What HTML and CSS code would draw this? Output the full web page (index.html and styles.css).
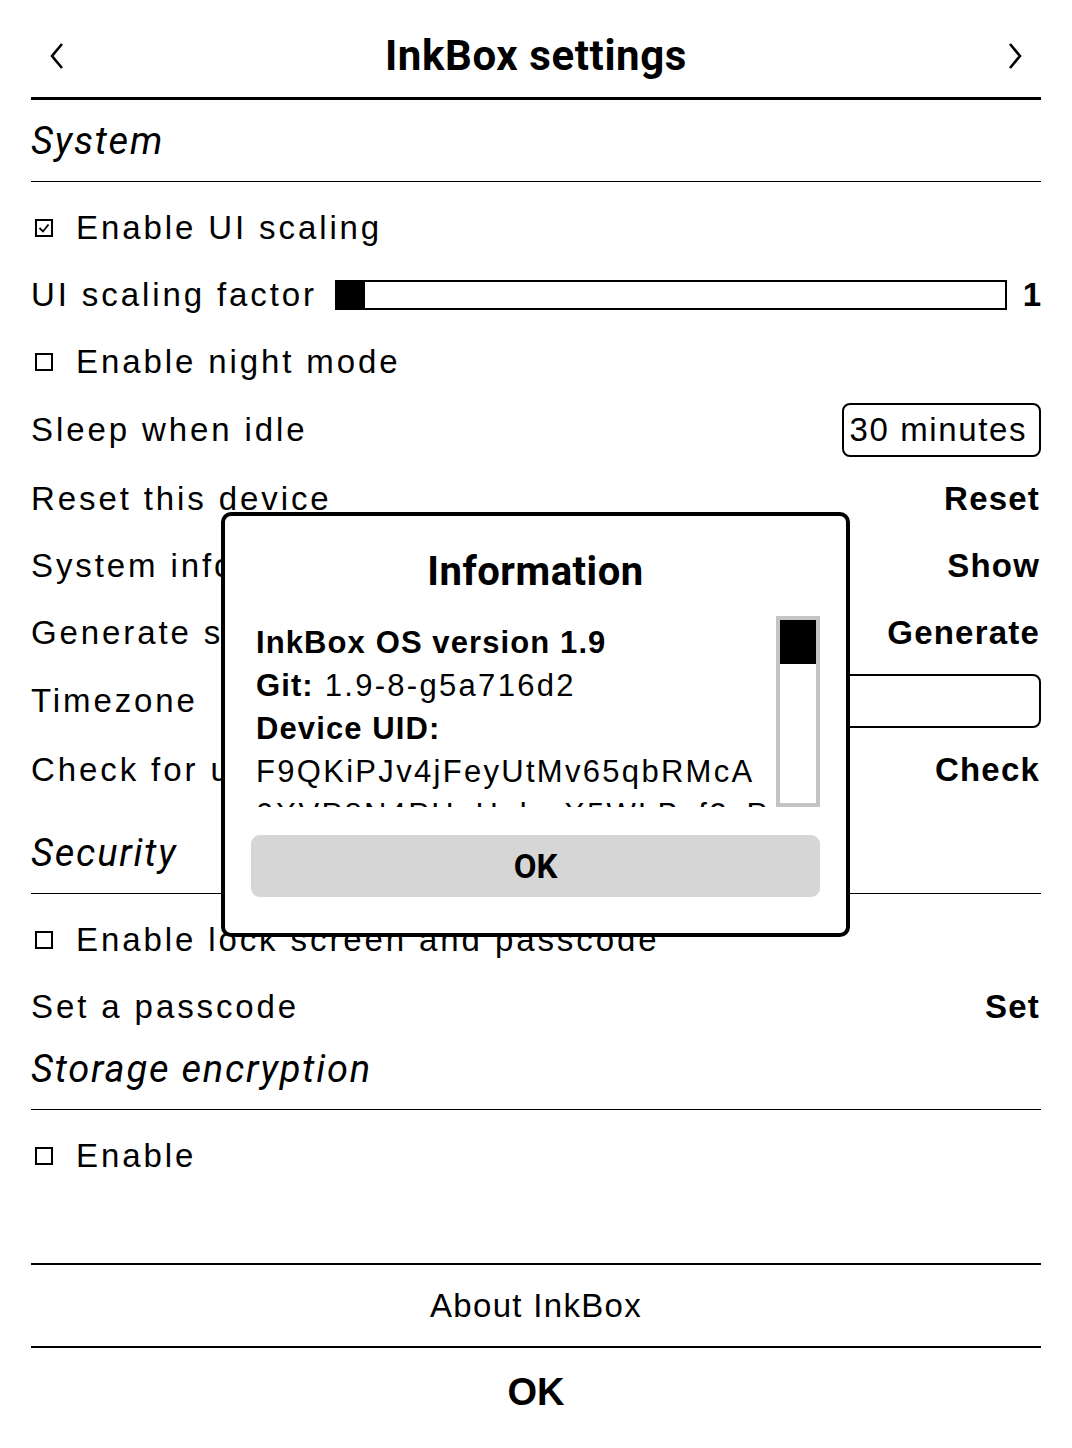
FILE: index.html
```html
<!DOCTYPE html>
<html>
<head>
<meta charset="utf-8">
<link rel="stylesheet" href="styles.css">
</head>
<body>
<div class="page">
  <div class="topbar">
    <svg class="chev" width="20" height="30" viewBox="0 0 20 30"><path d="M14 3 L4 15 L14 27" fill="none" stroke="#000" stroke-width="2.6"/></svg>
    <div class="title">InkBox settings</div>
    <svg class="chev" width="20" height="30" viewBox="0 0 20 30"><path d="M6 3 L16 15 L6 27" fill="none" stroke="#000" stroke-width="2.6"/></svg>
  </div>

  <div class="section sys">System</div>
  <div class="rows">
    <div class="row"><span class="cb"><svg width="18" height="18" viewBox="0 0 18 18"><rect x="1" y="1" width="16" height="16" fill="none" stroke="#000" stroke-width="2"/><path d="M4.5 9 L8 12.5 L13.5 5.5" fill="none" stroke="#000" stroke-width="1.8"/></svg></span><span class="label">Enable UI scaling</span></div>
    <div class="row"><span class="label">UI scaling factor</span><div class="slider"><div class="fill"></div></div><span class="val">1</span></div>
    <div class="row"><span class="cb"><svg width="18" height="18" viewBox="0 0 18 18"><rect x="1" y="1" width="16" height="16" fill="none" stroke="#000" stroke-width="2"/></svg></span><span class="label">Enable night mode</span></div>
    <div class="row combo-row"><span class="label">Sleep when idle</span><span class="spacer"></span><div class="combo">30 minutes</div></div>
    <div class="row"><span class="label">Reset this device</span><span class="spacer"></span><span class="btn">Reset</span></div>
    <div class="row"><span class="label">System info</span><span class="spacer"></span><span class="btn">Show</span></div>
    <div class="row"><span class="label">Generate system report</span><span class="spacer"></span><span class="btn">Generate</span></div>
    <div class="row combo-row"><span class="label">Timezone</span><div class="combo wide"></div></div>
    <div class="row"><span class="label">Check for updates</span><span class="spacer"></span><span class="btn">Check</span></div>
  </div>

  <div class="section sec">Security</div>
  <div class="rows">
    <div class="row"><span class="cb"><svg width="18" height="18" viewBox="0 0 18 18"><rect x="1" y="1" width="16" height="16" fill="none" stroke="#000" stroke-width="2"/></svg></span><span class="label">Enable lock screen and passcode</span></div>
    <div class="row"><span class="label">Set a passcode</span><span class="spacer"></span><span class="btn">Set</span></div>
  </div>

  <div class="section">Storage encryption</div>
  <div class="rows">
    <div class="row"><span class="cb"><svg width="18" height="18" viewBox="0 0 18 18"><rect x="1" y="1" width="16" height="16" fill="none" stroke="#000" stroke-width="2"/></svg></span><span class="label">Enable</span></div>
  </div>

  <div class="grow"></div>
  <div class="about">About InkBox</div>
  <div class="ok">OK</div>

  <div class="dialog">
    <div class="dtitle">Information</div>
    <div class="dbody">
      <div class="dtext">
        <div class="dl"><b>InkBox OS version 1.9</b></div>
        <div class="dl"><b>Git:</b> 1.9-8-g5a716d2</div>
        <div class="dl"><b>Device UID:</b></div>
        <div class="dl">F9QKiPJv4jFeyUtMv65qbRMcA</div>
        <div class="dl">0XVP8N4PHuHqbwX5WLBzf2cP</div>
      </div>
      <div class="scroll"><div class="handle"></div></div>
    </div>
    <div class="dok">OK</div>
  </div>
</div>
</body>
</html>
```

FILE: styles.css
```css
html, body {
  margin: 0;
  padding: 0;
  background: #fff;
}
body {
  width: 1072px;
  height: 1448px;
  overflow: hidden;
  font-family: "Liberation Sans", Arial, sans-serif;
  color: #000;
}
.page {
  position: relative;
  height: 1448px;
  padding: 0 31px;
  box-sizing: border-box;
  display: flex;
  flex-direction: column;
}
.topbar {
  height: 100px;
  box-sizing: border-box;
  padding: 14px 17px 0 17px;
  border-bottom: 3px solid #000;
  display: flex;
  align-items: center;
  justify-content: space-between;
}
.title {
  font-family: Roboto, "Liberation Sans", sans-serif;
  font-weight: 700;
  font-size: 42px;
  letter-spacing: 0.6px;
}
.section {
  height: 70px;
  box-sizing: border-box;
  border-bottom: 1px solid #000;
  display: flex;
  align-items: flex-end;
  padding-bottom: 20px;
  line-height: 40px;
  font-family: Roboto, "Liberation Sans", sans-serif;
  font-style: italic;
  font-size: 38px;
  letter-spacing: 1.8px;
}
.section.sys { margin-top: 12px; }
.section.sec { margin-top: 21px; }
.rows {
  margin-top: 12px;
  display: flex;
  flex-direction: column;
}
.row {
  height: 67px;
  display: flex;
  align-items: center;
  font-size: 33px;
  letter-spacing: 2.9px;
  white-space: nowrap;
}
.row.combo-row { height: 70px; }
.cb {
  width: 18px;
  height: 18px;
  margin: 0 23px 0 4px;
  display: flex;
}
.spacer { flex: 1; }
.slider {
  flex: 1;
  height: 30px;
  margin-left: 18px;
  border: 2px solid #000;
  box-sizing: border-box;
  display: flex;
}
.fill {
  width: 28px;
  background: #000;
}
.val {
  font-weight: 700;
  width: 34px;
  text-align: right;
  letter-spacing: 0;
}
.combo {
  height: 54px;
  box-sizing: border-box;
  border: 2px solid #000;
  border-radius: 8px;
  padding: 0 12px 0 6px;
  display: flex;
  align-items: center;
  letter-spacing: 1.6px;
}
.combo.wide {
  flex: 1;
  margin-left: 40px;
}
.btn {
  font-weight: 700;
  letter-spacing: 1.2px;
  padding-right: 1px;
}
.grow { flex: 1; }
.about {
  height: 85px;
  box-sizing: border-box;
  border-top: 2px solid #000;
  border-bottom: 2px solid #000;
  display: flex;
  align-items: center;
  justify-content: center;
  font-size: 33px;
  letter-spacing: 1.3px;
}
.ok {
  height: 88px;
  margin-bottom: 12px;
  display: flex;
  align-items: center;
  justify-content: center;
  font-weight: 700;
  font-size: 38px;
}
.dialog {
  position: absolute;
  left: 221px;
  top: 512px;
  width: 629px;
  height: 425px;
  box-sizing: border-box;
  border: 4px solid #000;
  border-radius: 10px;
  background: #fff;
  padding: 0 26px 0 26px;
  display: flex;
  flex-direction: column;
}
.dtitle {
  height: 100px;
  display: flex;
  align-items: center;
  justify-content: center;
  padding-top: 10px;
  box-sizing: border-box;
  font-family: Roboto, "Liberation Sans", sans-serif;
  font-weight: 700;
  font-size: 40px;
  letter-spacing: 0.5px;
}
.dbody {
  height: 191px;
  display: flex;
  justify-content: space-between;
}
.dtext {
  padding-left: 5px;
  overflow: hidden;
  height: 191px;
  font-size: 31px;
  letter-spacing: 2.3px;
}
.dtext b { letter-spacing: 1.1px; }
.dl {
  height: 43px;
  line-height: 43px;
  white-space: nowrap;
}
.dl:first-child { margin-top: 5px; }
.scroll {
  width: 44px;
  height: 191px;
  box-sizing: border-box;
  border: 4px solid #c4c4c4;
  flex: none;
  margin-right: 0;
}
.handle {
  height: 44px;
  background: #000;
}
.dok {
  margin-top: 28px;
  height: 62px;
  border-radius: 9px;
  background: #d6d6d6;
  display: flex;
  align-items: center;
  justify-content: center;
  font-family: Roboto, "Liberation Sans", sans-serif;
  font-weight: 700;
  font-size: 33px;
}
```
